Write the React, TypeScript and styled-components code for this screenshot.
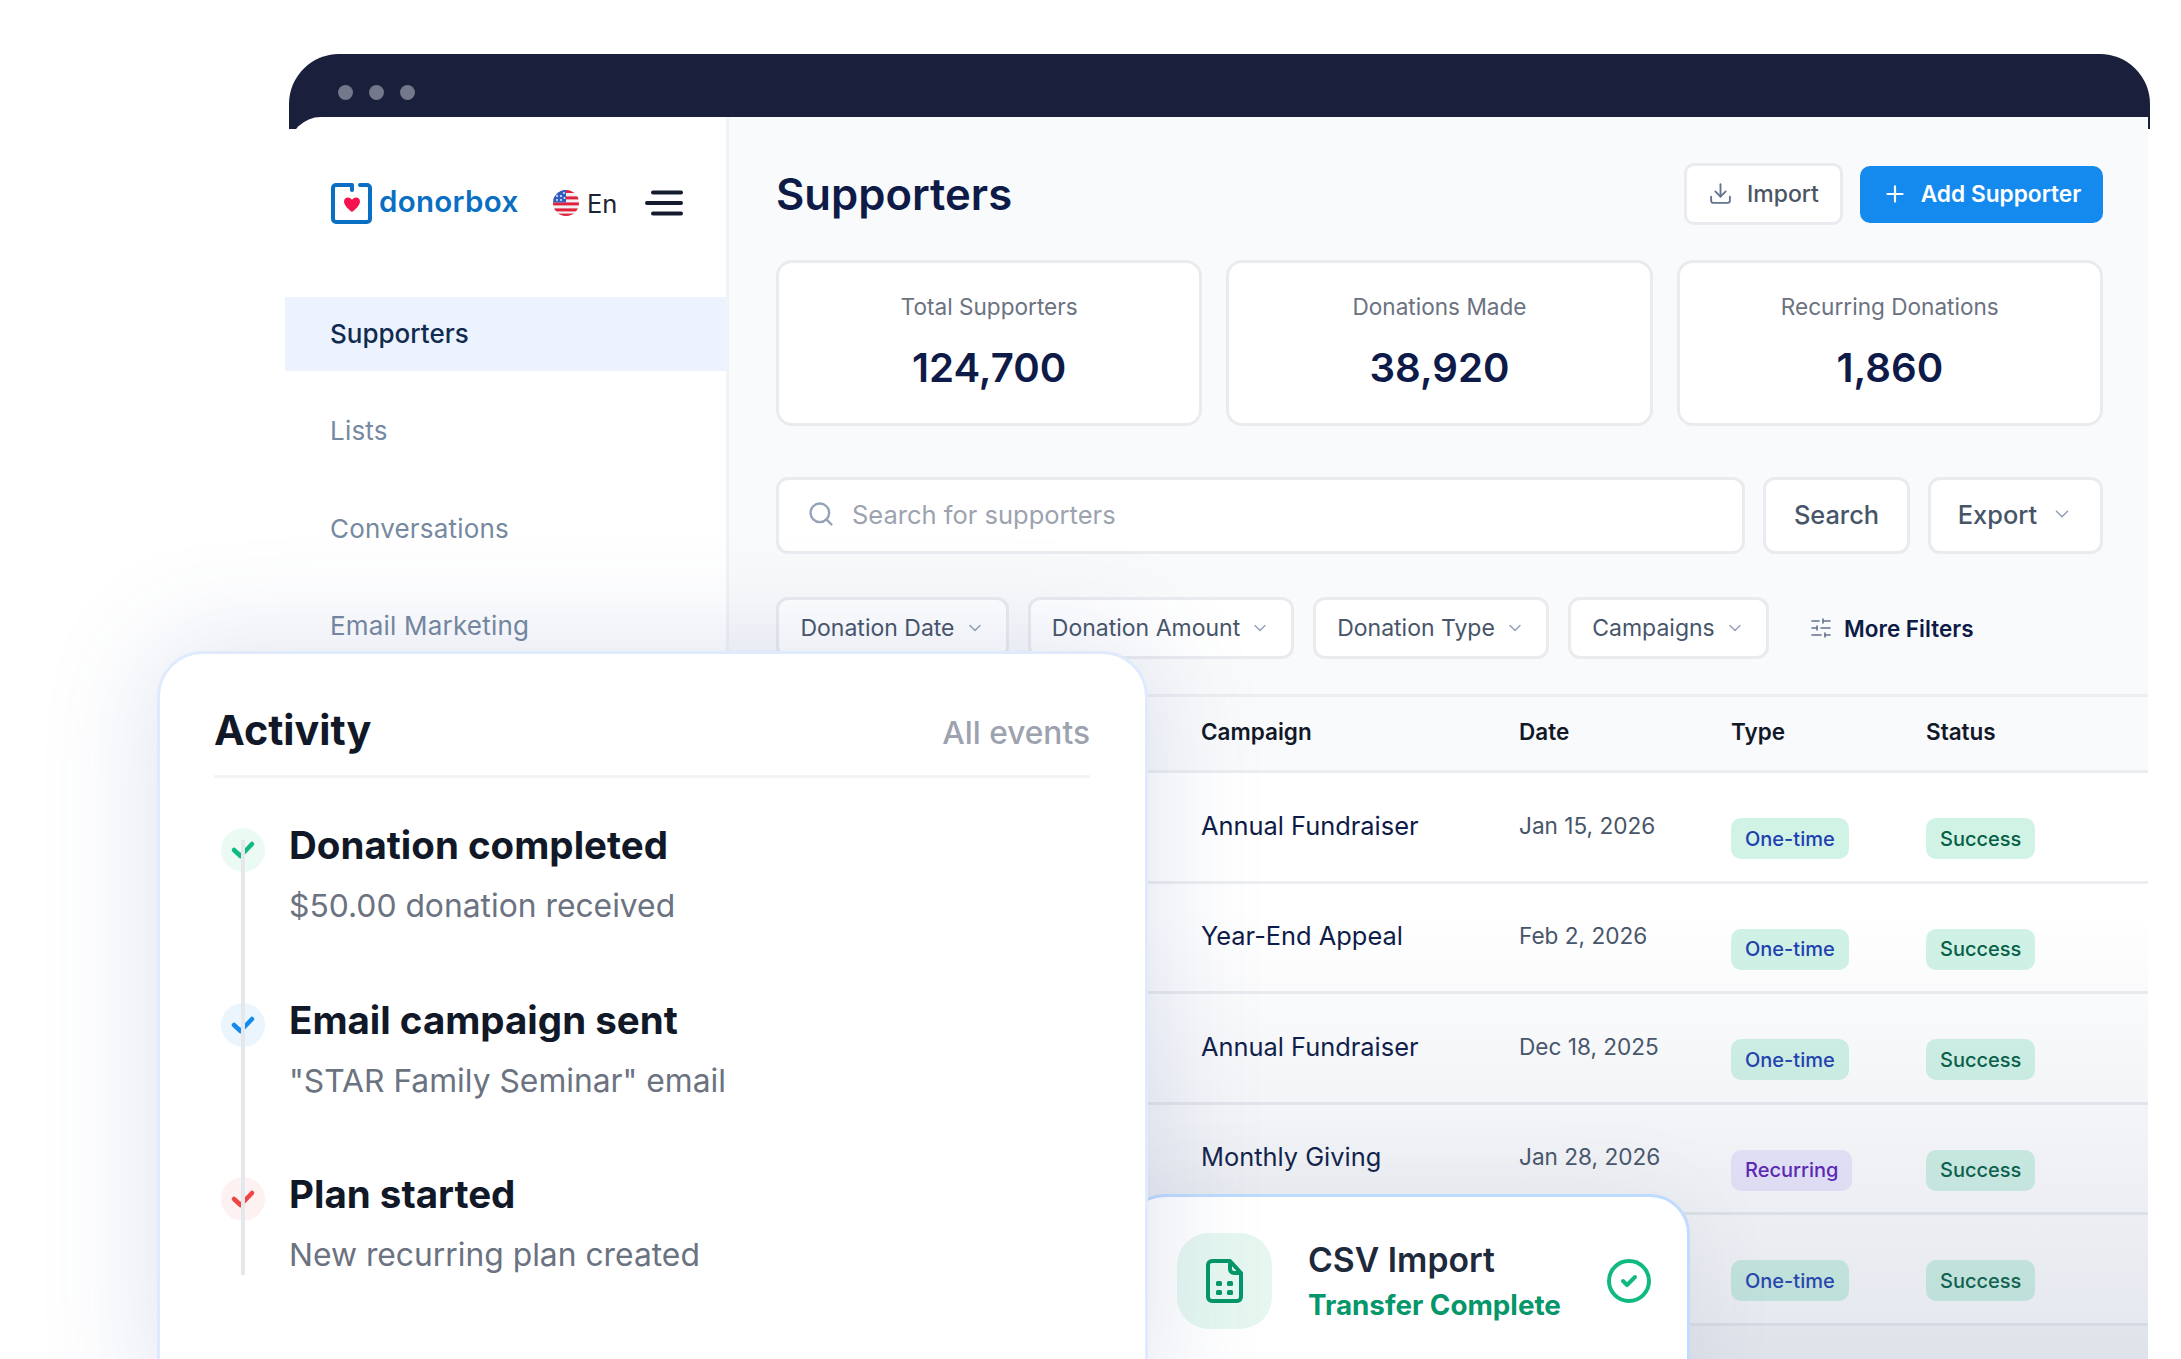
import styled, { createGlobalStyle } from 'styled-components'
import { ChevronDown, CircleCheck, Download, Plus, Search, SlidersHorizontal } from 'lucide-react'

const GlobalStyle = createGlobalStyle`
  html, body { margin: 0; padding: 0; background: #fff; }
  body { font-family: Inter, "Liberation Sans", sans-serif; }
  * { box-sizing: border-box; }
`

const Stage = styled.div`
  position: relative;
  width: 2181px;
  height: 1359px;
  overflow: hidden;
  background: #fff;
  padding: 54px 31px 0 289px;
`

const TitleBar = styled.div`
  height: 75px;
  background: #1a1f3c;
  border-radius: 50px 50px 0 0;
  display: flex;
  gap: 16px;
  padding: 31px 0 0 49px;
`

const Dot = styled.span`
  width: 15px;
  height: 15px;
  border-radius: 50%;
  background: #75778a;
`

const Body = styled.div`
  position: relative;
  display: flex;
  height: 1242px;
  margin: -12px 2px 0 0;
  background: #fff;
  border-top-left-radius: 32px;

  &::after {
    content: '';
    position: absolute;
    inset: 0;
    pointer-events: none;
    background: linear-gradient(to bottom, rgba(90, 110, 150, 0) 64%, rgba(90, 110, 150, 0.17) 100%);
  }
`

const Sidebar = styled.aside`
  width: 440px;
  flex: none;
  padding-top: 66px;
  border-right: 3px solid #f1f3f6;
`

const BrandRow = styled.div`
  display: flex;
  align-items: center;
  height: 40px;
  padding-left: 42px;
`

const Wordmark = styled.span`
  margin-left: 7px;
  width: 139px;
  font-size: 29.5px;
  font-weight: 600;
  letter-spacing: 0.3px;
  line-height: 40px;
  margin-top: -5px;
  color: #0a6fc2;
`

const Lang = styled.span`
  margin-left: 35px;
  display: flex;
  align-items: center;
  gap: 8px;
  font-size: 25.5px;
  color: #1b2433;
`

const Burger = styled.svg`
  margin-left: 28px;
  flex: none;
`

const Nav = styled.nav`
  margin: 74px 0 0 -4px;
  display: flex;
  flex-direction: column;
  gap: 23.5px;
`

const NavItem = styled.div<{ $active?: boolean }>`
  height: 74px;
  display: flex;
  align-items: center;
  padding: 0 0 2px 45px;
  font-size: 26px;
  letter-spacing: ${(p) => (p.$active ? 0 : '0.2px')};
  font-weight: ${(p) => (p.$active ? 500 : 400)};
  color: ${(p) => (p.$active ? '#0f2b4f' : '#7689a0')};
  background: ${(p) => (p.$active ? '#ecf3fe' : 'transparent')};
`

const Main = styled.main`
  flex: 1;
  min-width: 0;
  background: #f9fafb;
  padding-top: 46px;
`

const Section = styled.div`
  padding: 0 45px 0 47px;
`

const Header = styled.div`
  display: flex;
  align-items: center;
  height: 62px;
`

const Heading = styled.h1`
  margin: 0 auto 0 0;
  font-size: 43.6px;
  font-weight: 600;
  color: #0e1a47;
`

const ImportButton = styled.button`
  height: 62px;
  width: 159px;
  display: flex;
  align-items: center;
  justify-content: center;
  gap: 14px;
  padding-bottom: 2px;
  background: #fff;
  border: 3px solid #e9ebef;
  border-radius: 10px;
  font: 500 23px Inter, sans-serif;
  color: #4b5563;
`

const AddButton = styled.button`
  margin-left: 17px;
  height: 57px;
  width: 243px;
  display: flex;
  align-items: center;
  justify-content: center;
  gap: 13px;
  padding-bottom: 2px;
  background: #158aee;
  border: 0;
  border-radius: 10px;
  font: 600 22.7px Inter, sans-serif;
  color: #fff;
`

const Stats = styled.div`
  margin-top: 35px;
  display: grid;
  grid-template-columns: repeat(3, 1fr);
  gap: 24px;
`

const StatCard = styled.div`
  height: 166px;
  padding-top: 29px;
  background: #fff;
  border: 3px solid #e9ebef;
  border-radius: 16px;
  text-align: center;
`

const StatLabel = styled.div`
  font-size: 22.6px;
  line-height: 30px;
  color: #6b7280;
`

const StatValue = styled.div`
  margin-top: 21px;
  font-size: 40.2px;
  line-height: 50px;
  font-weight: 600;
  color: #0e1a47;
`

const SearchRow = styled.div`
  margin-top: 51px;
  display: flex;
  gap: 18px;
`

const SearchBox = styled.div`
  flex: 1;
  height: 77px;
  display: flex;
  align-items: center;
  gap: 17px;
  padding: 0 0 3px 28px;
  background: #fff;
  border: 3px solid #e9ebef;
  border-radius: 12px;
  font-size: 25.5px;
  color: #9ca3af;
`

const OutlineButton = styled.button<{ $width: number }>`
  width: ${(p) => p.$width}px;
  height: 77px;
  flex: none;
  display: flex;
  align-items: center;
  justify-content: center;
  gap: 14px;
  padding-bottom: 4px;
  background: #fff;
  border: 3px solid #e9ebef;
  border-radius: 12px;
  font: 500 25.4px Inter, sans-serif;
  color: #475569;
`

const FilterRow = styled.div`
  margin-top: 43px;
  display: flex;
  align-items: center;
  gap: 19px;
`

const FilterChip = styled.button<{ $width: number }>`
  width: ${(p) => p.$width}px;
  height: 62px;
  flex: none;
  display: flex;
  align-items: center;
  justify-content: center;
  gap: 10px;
  background: #fff;
  border: 3px solid #e9ebef;
  border-radius: 12px;
  font: 400 23px Inter, sans-serif;
  color: #475569;
`

const MoreFilters = styled.span`
  margin-left: 21px;
  display: flex;
  align-items: center;
  gap: 11px;
  font-size: 22.5px;
  font-weight: 600;
  color: #0e1a47;
`

const Table = styled.div`
  margin-top: 35px;
  border-top: 3px solid #eceef1;
`

const TableRow = styled.div<{ $head?: boolean }>`
  display: grid;
  grid-template-columns: 318px 212px 195px 1fr;
  align-items: center;
  height: ${(p) => (p.$head ? '76px' : '110.5px')};
  padding: ${(p) => (p.$head ? '0 0 5px 472px' : '0 0 0 472px')};
  background: ${(p) => (p.$head ? '#f9fafb' : '#fff')};
  border-bottom: 3px solid #eceef1;
`

const HeadCell = styled.div`
  font-size: 22.5px;
  font-weight: 600;
  color: #111827;
`

const CampaignCell = styled.div`
  margin-bottom: 3px;
  font-size: 25.4px;
  color: #0e1a47;
`

const DateCell = styled.div`
  margin-bottom: 3px;
  font-size: 22.6px;
  color: #475569;
`

const badgeColors = {
  once: { bg: '#d1f3e6', fg: '#1e40af' },
  recurring: { bg: '#ede9fe', fg: '#5b21b6' },
  success: { bg: '#d1f3e6', fg: '#065f46' },
}

const Badge = styled.span<{ $kind: keyof typeof badgeColors }>`
  justify-self: start;
  margin-top: 24px;
  height: 41px;
  display: flex;
  align-items: center;
  padding: 0 14px;
  border-radius: 10px;
  font-size: 20px;
  font-weight: 500;
  background: ${(p) => badgeColors[p.$kind].bg};
  color: ${(p) => badgeColors[p.$kind].fg};
`

const ActivityCard = styled.section`
  position: absolute;
  left: 157px;
  top: 651px;
  width: 991px;
  height: 760px;
  padding: 45px 55px 0 54px;
  background: #fff;
  border: 3px solid #dfebfd;
  border-radius: 46px;
  box-shadow: 0 0 110px 6px rgba(70, 95, 165, 0.17);
`

const ActivityHead = styled.div`
  display: flex;
  justify-content: space-between;
  align-items: center;
  border-bottom: 3px solid #f3f4f6;
  height: 79px;
  padding-bottom: 14px;
`

const ActivityTitle = styled.h2`
  margin: 0;
  font-size: 41.3px;
  font-weight: 700;
  color: #111827;
`

const AllEvents = styled.span`
  margin-top: 4px;
  font-size: 31.7px;
  font-weight: 500;
  color: #9ca3af;
`

const Timeline = styled.div`
  position: relative;
  margin-top: 50px;
  display: flex;
  flex-direction: column;
  gap: 40px;
`

const TimelineRail = styled.div`
  position: absolute;
  left: 27px;
  top: 12px;
  width: 4px;
  height: 435px;
  background: #e5e7eb;
`

const Event = styled.div`
  display: flex;
  height: 134.5px;
`

const EventDot = styled.div<{ $bg: string; $fg: string }>`
  margin: 0 24px 0 7px;
  width: 44px;
  height: 44px;
  flex: none;
  display: flex;
  align-items: center;
  justify-content: center;
  border-radius: 50%;
  background: ${(p) => p.$bg};
  color: ${(p) => p.$fg};
`

const EventTitle = styled.div`
  font-size: 38.5px;
  line-height: 50px;
  margin-top: -8px;
  font-weight: 700;
  color: #111827;
`

const EventSub = styled.div`
  margin-top: 11px;
  font-size: 31.8px;
  line-height: 50px;
  color: #6b7280;
`

const ImportCard = styled.section`
  position: absolute;
  left: 1125px;
  top: 1194px;
  width: 565px;
  height: 240px;
  padding: 36px 0 0 49px;
  display: flex;
  background: #fff;
  border: 3px solid #bfdbfe;
  border-radius: 40px;
  box-shadow: 0 0 90px rgba(71, 85, 105, 0.08);
`

const FileBox = styled.div`
  width: 95px;
  height: 96px;
  flex: none;
  display: flex;
  align-items: center;
  justify-content: center;
  border-radius: 32px;
  background: #e6f7f0;
`

const ImportText = styled.div`
  margin-left: 36px;
  width: 297px;
`

const ImportTitle = styled.div`
  margin-top: 2px;
  font-size: 33.7px;
  line-height: 50px;
  font-weight: 600;
  color: #1e293b;
`

const ImportStatus = styled.div`
  font-size: 27.8px;
  line-height: 40px;
  font-weight: 700;
  color: #059669;
`

const ImportCheck = styled.div`
  margin-top: 24px;
  color: #10b981;
`

const FlagIcon = () => (
  <svg width="26" height="26" viewBox="0 0 26 26">
    <defs>
      <clipPath id="flag-round"><circle cx="13" cy="13" r="13" /></clipPath>
    </defs>
    <g clipPath="url(#flag-round)">
      <rect width="26" height="26" fill="#f1f1f1" />
      <rect y="0" width="26" height="3" fill="#e0213f" />
      <rect y="6.4" width="26" height="3" fill="#e0213f" />
      <rect y="12.4" width="26" height="3" fill="#e0213f" />
      <rect y="18.4" width="26" height="3" fill="#e0213f" />
      <rect y="23.6" width="26" height="3" fill="#e0213f" />
      <rect width="13" height="12.4" fill="#2f5fc4" />
      <g fill="#e8eefb">
        <circle cx="4" cy="6" r="1" /><circle cx="8" cy="6" r="1" /><circle cx="11" cy="3" r="1" />
        <circle cx="4" cy="10" r="1" /><circle cx="8" cy="10" r="1" /><circle cx="11.5" cy="8" r="1" />
      </g>
    </g>
  </svg>
)

const LogoMark = () => (
  <svg width="41" height="41" viewBox="0 0 41 41" fill="none">
    <path
      d="M21 7V2H5a3 3 0 0 0-3 3v31a3 3 0 0 0 3 3h31a3 3 0 0 0 3-3V5a3 3 0 0 0-3-3h-7"
      stroke="#0a6fc2"
      strokeWidth="4"
      strokeLinecap="round"
      strokeLinejoin="round"
    />
    <path
      d="M21 29c-1-1-8-5.500-8-10.500 0-2.500 2-4 4-4 1.800 0 3.200 1 4 2.300.800-1.300 2.200-2.300 4-2.300 2 0 4 1.500 4 4 0 5-7 9.500-8 10.500z"
      fill="#f5134f"
    />
  </svg>
)

const MenuIcon = () => (
  <Burger width="38" height="26" viewBox="0 0 38 26" fill="none" stroke="#141c2e" strokeWidth="4" strokeLinecap="round">
    <path d="M8 2.500h28M2 13h34M8 23.500h28" />
  </Burger>
)

const TinyCheck = () => (
  <svg width="26" height="22" viewBox="0 0 26 22" fill="none" stroke="currentColor" strokeWidth="4.500" strokeLinecap="round" strokeLinejoin="round">
    <path d="M4 11l6.500 6L22 5" />
  </svg>
)

const FileIcon = () => (
  <svg width="37" height="44" viewBox="0 0 37 44" fill="none" stroke="#059669" strokeWidth="4" strokeLinejoin="round">
    <path d="M6 2h18l11 12v24a4 4 0 0 1-4 4H6a4 4 0 0 1-4-4V6a4 4 0 0 1 4-4z" />
    <path d="M24 2v8a4 4 0 0 0 4 4h7" />
    <g fill="#059669" stroke="none">
      <rect x="10" y="22" width="6" height="5" rx="1.500" />
      <rect x="21" y="22" width="6" height="5" rx="1.500" />
      <rect x="10" y="31" width="6" height="5" rx="1.500" />
      <rect x="21" y="31" width="6" height="5" rx="1.500" />
    </g>
  </svg>
)

const navItems = ['Supporters', 'Lists', 'Conversations', 'Email Marketing']

const stats = [
  { label: 'Total Supporters', value: '124,700' },
  { label: 'Donations Made', value: '38,920' },
  { label: 'Recurring Donations', value: '1,860' },
]

const filters = [
  { label: 'Donation Date', width: 233 },
  { label: 'Donation Amount', width: 266 },
  { label: 'Donation Type', width: 236 },
  { label: 'Campaigns', width: 201 },
]

const rows = [
  { campaign: 'Annual Fundraiser', date: 'Jan 15, 2026', recurring: false },
  { campaign: 'Year-End Appeal', date: 'Feb 2, 2026', recurring: false },
  { campaign: 'Annual Fundraiser', date: 'Dec 18, 2025', recurring: false },
  { campaign: 'Monthly Giving', date: 'Jan 28, 2026', recurring: true },
  { campaign: '', date: '', recurring: false },
]

const events = [
  { title: 'Donation completed', sub: '$50.00 donation received', bg: '#ebfaf3', fg: '#10b981' },
  { title: 'Email campaign sent', sub: '"STAR Family Seminar" email', bg: '#ebf5fe', fg: '#158aee' },
  { title: 'Plan started', sub: 'New recurring plan created', bg: '#fef1f1', fg: '#ef4444' },
]

const App = () => {
  return (
    <Stage>
      <GlobalStyle />
      <TitleBar>
        <Dot />
        <Dot />
        <Dot />
      </TitleBar>
      <Body>
        <Sidebar>
          <BrandRow>
            <LogoMark />
            <Wordmark>donorbox</Wordmark>
            <Lang>
              <FlagIcon />
              En
            </Lang>
            <MenuIcon />
          </BrandRow>
          <Nav>
            {navItems.map((item, i) => (
              <NavItem key={item} $active={i === 0}>{item}</NavItem>
            ))}
          </Nav>
        </Sidebar>
        <Main>
          <Section>
            <Header>
              <Heading>Supporters</Heading>
              <ImportButton>
                <Download size={25} strokeWidth={1.8} color="#64748b" />
                Import
              </ImportButton>
              <AddButton>
                <Plus size={26} strokeWidth={2} />
                Add Supporter
              </AddButton>
            </Header>
            <Stats>
              {stats.map((s) => (
                <StatCard key={s.label}>
                  <StatLabel>{s.label}</StatLabel>
                  <StatValue>{s.value}</StatValue>
                </StatCard>
              ))}
            </Stats>
            <SearchRow>
              <SearchBox>
                <Search size={28} strokeWidth={2} color="#94a3b8" />
                Search for supporters
              </SearchBox>
              <OutlineButton $width={147}>Search</OutlineButton>
              <OutlineButton $width={175}>
                Export
                <ChevronDown size={22} strokeWidth={1.8} color="#94a3b8" />
              </OutlineButton>
            </SearchRow>
            <FilterRow>
              {filters.map((f) => (
                <FilterChip key={f.label} $width={f.width}>
                  {f.label}
                  <ChevronDown size={20} strokeWidth={1.8} color="#94a3b8" />
                </FilterChip>
              ))}
              <MoreFilters>
                <SlidersHorizontal size={24} strokeWidth={1.6} color="#64748b" />
                More Filters
              </MoreFilters>
            </FilterRow>
          </Section>
          <Table>
            <TableRow $head>
              <HeadCell>Campaign</HeadCell>
              <HeadCell>Date</HeadCell>
              <HeadCell>Type</HeadCell>
              <HeadCell>Status</HeadCell>
            </TableRow>
            {rows.map((r, i) => (
              <TableRow key={i}>
                <CampaignCell>{r.campaign}</CampaignCell>
                <DateCell>{r.date}</DateCell>
                <Badge $kind={r.recurring ? 'recurring' : 'once'}>{r.recurring ? 'Recurring' : 'One-time'}</Badge>
                <Badge $kind="success">Success</Badge>
              </TableRow>
            ))}
          </Table>
        </Main>
      </Body>

      <ImportCard>
        <FileBox>
          <FileIcon />
        </FileBox>
        <ImportText>
          <ImportTitle>CSV Import</ImportTitle>
          <ImportStatus>Transfer Complete</ImportStatus>
        </ImportText>
        <ImportCheck>
          <CircleCheck size={48} strokeWidth={2} />
        </ImportCheck>
      </ImportCard>

      <ActivityCard>
        <ActivityHead>
          <ActivityTitle>Activity</ActivityTitle>
          <AllEvents>All events</AllEvents>
        </ActivityHead>
        <Timeline>
          {events.map((e) => (
            <Event key={e.title}>
              <EventDot $bg={e.bg} $fg={e.fg}>
                <TinyCheck />
              </EventDot>
              <div>
                <EventTitle>{e.title}</EventTitle>
                <EventSub>{e.sub}</EventSub>
              </div>
            </Event>
          ))}
          <TimelineRail />
        </Timeline>
      </ActivityCard>
    </Stage>
  )
}

export default App
